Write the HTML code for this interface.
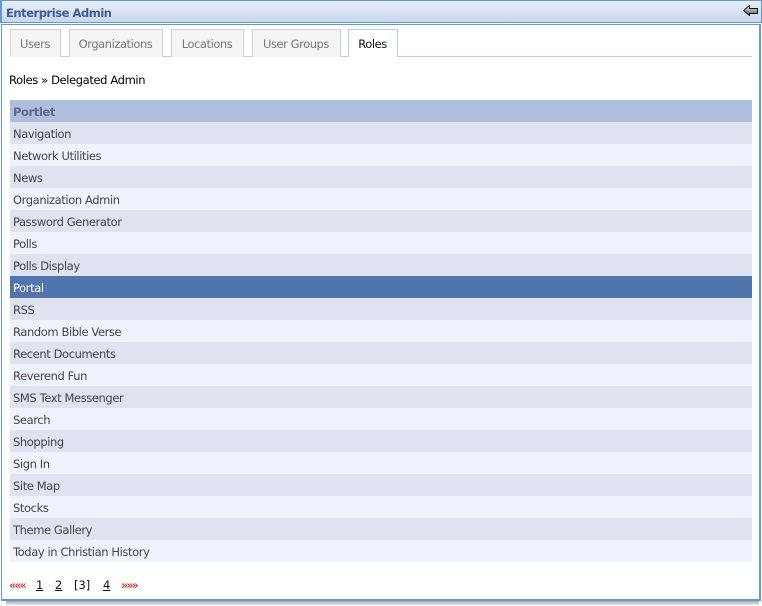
<!DOCTYPE html>
<html><head><meta charset="utf-8"><style>
html,body{margin:0;padding:0;width:762px;height:606px;overflow:hidden;background:#fff;font-family:"DejaVu Sans","Liberation Sans",sans-serif;font-size:11.5px;color:#444}
div,a,span{position:absolute;box-sizing:border-box;white-space:nowrap}
#title{left:0;top:0;width:762px;height:23px;background:linear-gradient(#eaf0fa,#c6d7ee);border:1px solid #5f9bd6;border-left-width:2px;border-right-width:1px}
#title span{left:4px;top:4px;font-weight:bold;font-size:11.5px;line-height:16px;color:#455a8c;letter-spacing:-.45px}
#shadow{left:6px;top:601px;width:753px;height:4px;background:linear-gradient(#a9a9a9,#eaeaea)}
#panel{left:1px;top:24px;width:760px;height:577px;background:#fff;border:1px solid #5f9bd6;border-width:1px 2px 2px 1px}
.tab{top:29px;height:28px;background:#f5f5f5;border:1px solid #d2d2d2;border-width:1px 1px 0 1px;text-align:center;line-height:29px;color:#777;letter-spacing:-.45px;text-indent:-1px}
#line{left:10px;top:56px;width:742px;height:1px;background:#b4cdf0}
#act{background:#fff;border:1px solid #b4cdf0;border-bottom:0;color:#111;height:28px}
#bc{left:9px;top:72px;color:#000;line-height:16px;letter-spacing:-.38px}
.r{left:10px;width:742px;height:22px;line-height:24px;padding-left:3px;color:#444;letter-spacing:-.4px}
.e{background:#dfe3ef}.o{background:#eff3fe}
.p{left:0;top:577px;line-height:16px;color:#111}
.u{text-decoration:underline;color:#111}
.red{color:#e00000;letter-spacing:-1.7px}
</style></head><body>
<div id="shadow"></div>
<div id="title"><span>Enterprise Admin</span>
<svg style="position:absolute;left:741px;top:4px" width="15" height="11" viewBox="0 0 15 11"><defs><linearGradient id="g" x1="0" y1="0" x2="0" y2="1"><stop offset="0" stop-color="#f2f2f2"/><stop offset="1" stop-color="#555"/></linearGradient></defs><path d="M.5 5.5 L6.5 .5 V3.5 H14.5 V8.5 H6.5 V10.5 Z" fill="url(#g)" stroke="#111" stroke-width="1"/></svg></div>
<div id="panel"></div>
<div id="line"></div>
<div class="tab" style="left:10px;width:51px">Users</div>
<div class="tab" style="left:69px;width:94px">Organizations</div>
<div class="tab" style="left:171px;width:73px">Locations</div>
<div class="tab" style="left:252px;width:89px">User Groups</div>
<div class="tab" id="act" style="left:348px;width:50px">Roles</div>
<div id="bc">Roles » Delegated Admin</div>
<div class="r" style="top:100px;background:#adbedf;color:#5d6b87;font-weight:bold">Portlet</div>
<div class="r e" style="top:122px">Navigation</div>
<div class="r o" style="top:144px">Network Utilities</div>
<div class="r e" style="top:166px">News</div>
<div class="r o" style="top:188px">Organization Admin</div>
<div class="r e" style="top:210px">Password Generator</div>
<div class="r o" style="top:232px">Polls</div>
<div class="r e" style="top:254px">Polls Display</div>
<div class="r" style="top:276px;background:#5274ad;color:#fff">Portal</div>
<div class="r e" style="top:298px">RSS</div>
<div class="r o" style="top:320px">Random Bible Verse</div>
<div class="r e" style="top:342px">Recent Documents</div>
<div class="r o" style="top:364px">Reverend Fun</div>
<div class="r e" style="top:386px">SMS Text Messenger</div>
<div class="r o" style="top:408px">Search</div>
<div class="r e" style="top:430px">Shopping</div>
<div class="r o" style="top:452px">Sign In</div>
<div class="r e" style="top:474px">Site Map</div>
<div class="r o" style="top:496px">Stocks</div>
<div class="r e" style="top:518px">Theme Gallery</div>
<div class="r o" style="top:540px">Today in Christian History</div>
<span class="p red" style="left:9px">«««</span>
<span class="p u" style="left:36px">1</span>
<span class="p u" style="left:55px">2</span>
<span class="p" style="left:74px">[3]</span>
<span class="p u" style="left:103px">4</span>
<span class="p red" style="left:121px">»»»</span>
</body></html>
